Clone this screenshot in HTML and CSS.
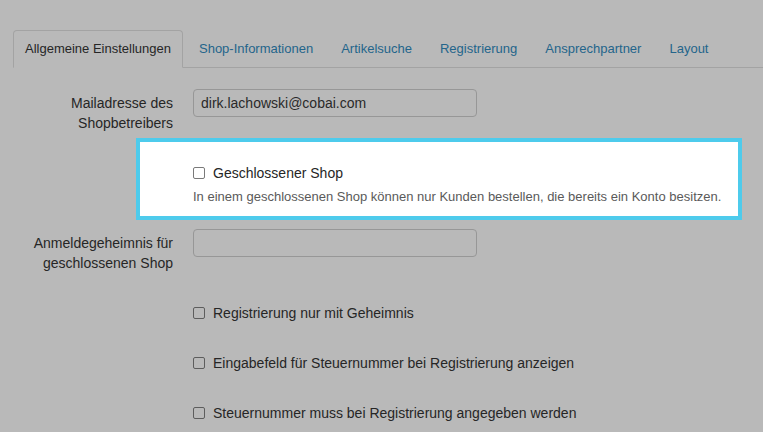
FILE: index.html
```html
<!DOCTYPE html>
<html lang="de">
<head>
<meta charset="utf-8">
<title>Einstellungen</title>
<link rel="stylesheet" href="styles.css">
</head>
<body>
<div class="page">
  <ul class="tabs">
    <li class="tab active"><a>Allgemeine Einstellungen</a></li>
    <li class="tab"><a>Shop-Informationen</a></li>
    <li class="tab"><a>Artikelsuche</a></li>
    <li class="tab"><a>Registrierung</a></li>
    <li class="tab"><a>Ansprechpartner</a></li>
    <li class="tab"><a>Layout</a></li>
  </ul>

  <div class="form">
    <div class="row row-mail">
      <label class="label">Mailadresse des Shopbetreibers</label>
      <div class="input">dirk.lachowski@cobai.com</div>
    </div>

    <div class="highlight">
      <label class="check"><span class="box"></span>Geschlossener Shop</label>
      <p class="help">In einem geschlossenen Shop können nur Kunden bestellen, die bereits ein Konto besitzen.</p>
    </div>

    <div class="row row-secret">
      <label class="label">Anmeldegeheimnis für geschlossenen Shop</label>
      <div class="input"></div>
    </div>

    <div class="checks">
      <label class="check"><span class="box"></span>Registrierung nur mit Geheimnis</label>
      <label class="check"><span class="box"></span>Eingabefeld für Steuernummer bei Registrierung anzeigen</label>
      <label class="check"><span class="box"></span>Steuernummer muss bei Registrierung angegeben werden</label>
    </div>
  </div>
</div>
</body>
</html>
```

FILE: styles.css
```css
html, body {
  margin: 0;
  padding: 0;
}
body {
  background: #b9b9b9;
  font-family: "Liberation Sans", Arial, sans-serif;
  color: #262626;
  font-size: 14px;
  overflow: hidden;
  height: 432px;
}
.page {
  padding-left: 13px;
}
.tabs {
  list-style: none;
  margin: 30px 0 0 0;
  padding: 0;
  display: flex;
  border-bottom: 1px solid #a3a3a3;
  height: 37px;
}
.tab {
  margin: 0 4px -1px 0;
}
.tab a {
  display: block;
  border: 1px solid transparent;
  border-radius: 4px 4px 0 0;
  padding: 10px 11px;
  line-height: 16px;
  font-size: 13px;
  color: #24658b;
}
.tab.active a {
  color: #262626;
  border-color: #a3a3a3;
  border-bottom-color: #b9b9b9;
  background: #b9b9b9;
}
.form {
  padding-top: 21px;
}
.row {
  display: grid;
  grid-template-columns: 160px 284px;
  column-gap: 20px;
  align-items: start;
}
.label {
  text-align: right;
  line-height: 20px;
  padding-top: 4px;
}
.row-mail .label {
  padding-left: 50px;
}
.row-secret .label {
  padding-left: 20px;
}
.input {
  height: 26px;
  border: 1px solid #979797;
  border-radius: 4px;
  padding: 0 7px;
  line-height: 26px;
  color: #2a2a2a;
}
.highlight {
  margin: 5px 0 0 123px;
  width: 545px;
  border: 4px solid #4ecbec;
  background: #ffffff;
  padding: 21px 0 9px 53px;
}
.check {
  display: flex;
  align-items: center;
  line-height: 20px;
  height: 20px;
}
.box {
  width: 10px;
  height: 10px;
  border: 1px solid #5d5d5d;
  border-radius: 2px;
  margin-right: 8px;
  flex: none;
}
.highlight .box {
  border-color: #7a7a7a;
}
.help {
  margin: 4px 0 0 0;
  line-height: 20px;
  font-size: 13px;
  color: #5a5a5a;
}
.row-secret {
  margin-top: 9px;
}
.checks {
  padding-left: 180px;
  padding-top: 30px;
  display: flex;
  flex-direction: column;
  gap: 30px;
}
```
